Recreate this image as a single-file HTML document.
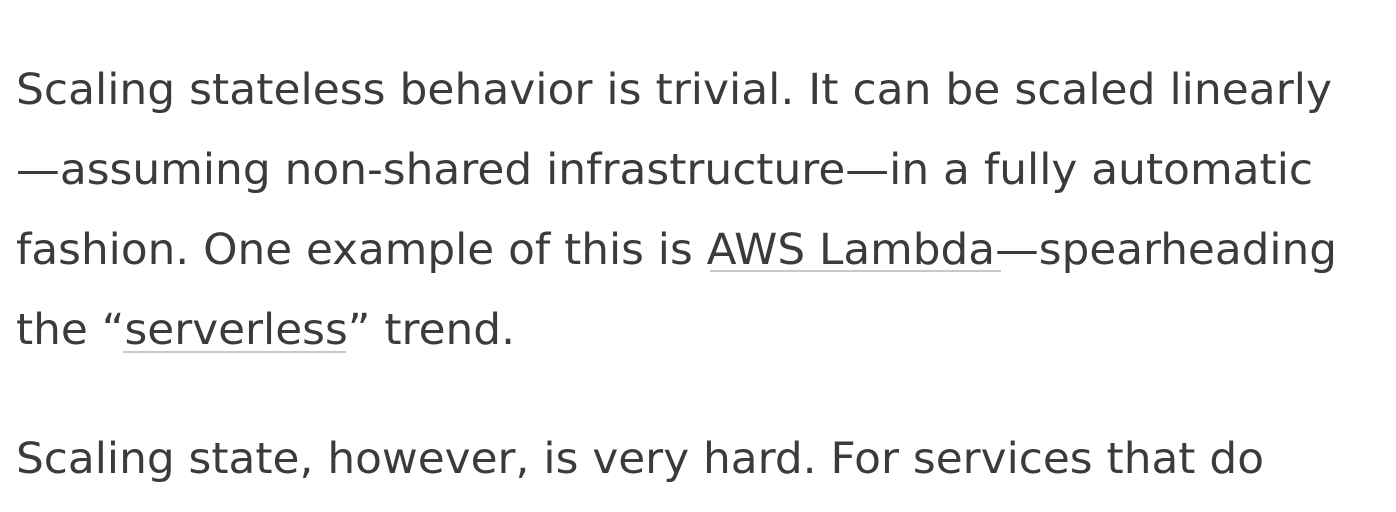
<!DOCTYPE html>
<html><head><meta charset="utf-8"><style>
html,body{margin:0;padding:0;background:#fff;width:1396px;height:512px;overflow:hidden}
svg text{font-family:"DejaVu Sans","Liberation Sans",sans-serif;font-size:43px;fill:#3b3b3b}
</style></head><body>
<svg width="1396" height="512" xmlns="http://www.w3.org/2000/svg">
<text x="16" y="104" textLength="1316" lengthAdjust="spacingAndGlyphs">Scaling stateless behavior is trivial. It can be scaled linearly</text>
<text x="16" y="184" textLength="1297" lengthAdjust="spacingAndGlyphs">—assuming non-shared infrastructure—in a fully automatic</text>
<text x="16" y="264" textLength="1321" lengthAdjust="spacingAndGlyphs">fashion. One example of this is AWS Lambda—spearheading</text>
<text x="16" y="344" textLength="499" lengthAdjust="spacingAndGlyphs">the “serverless” trend.</text>
<text x="16" y="473" textLength="1248" lengthAdjust="spacingAndGlyphs">Scaling state, however, is very hard. For services that do</text>
<rect x="710" y="270" width="291" height="2" fill="#c8c8c8"/>
<rect x="123" y="351" width="223" height="2" fill="#c8c8c8"/>
</svg>
</body></html>
